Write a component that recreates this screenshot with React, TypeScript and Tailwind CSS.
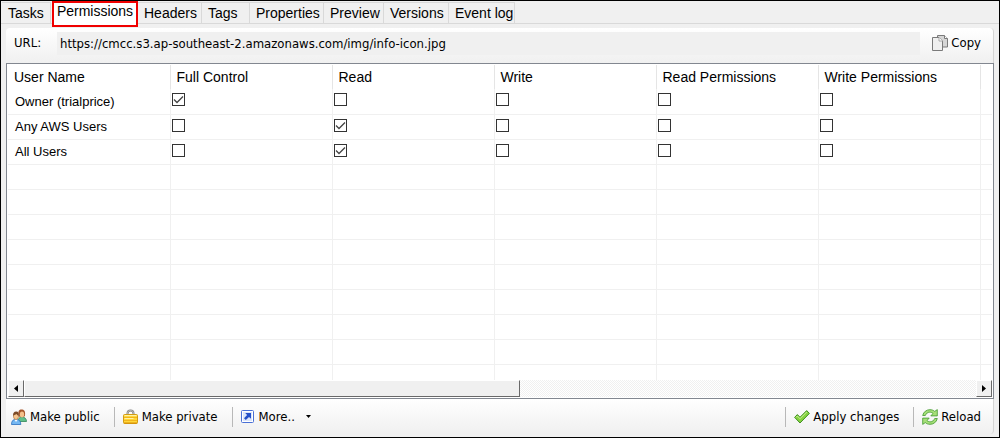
import type { ReactNode } from "react";
import { useState } from "react";

const tabs = [
  { name: "Tasks", width: "w-[49px]" },
  { name: "Permissions", width: "w-[86px]" },
  { name: "Headers", width: "w-[64px]" },
  { name: "Tags", width: "w-[48px]" },
  { name: "Properties", width: "w-[74px]" },
  { name: "Preview", width: "w-[60px]" },
  { name: "Versions", width: "w-[65px]" },
  { name: "Event log", width: "w-[66px]" },
];

const columns = ["Full Control", "Read", "Write", "Read Permissions", "Write Permissions"];

const initialUsers = [
  { name: "Owner (trialprice)", grants: [true, false, false, false, false] },
  { name: "Any AWS Users", grants: [false, true, false, false, false] },
  { name: "All Users", grants: [false, true, false, false, false] },
];

const emptyRows = Array.from({ length: 9 }, (_, i) => i);

function CopyIcon() {
  return (
    <svg width="16" height="16" viewBox="0 0 16 16" fill="none" stroke="#7a7a7a">
      <path d="M5.500 .5h7l3 3v8.500h-10z" fill="#d6d6d6" />
      <path d="M12.500 .5v3h3" fill="#fff" />
      <path d="M.5 2.500h6.500l3.500 3.500v9.500h-10z" fill="#efefef" />
      <path d="M7 2.500v3.500h3.500" fill="#fff" stroke="#a8a8a8" />
    </svg>
  );
}

function UsersIcon() {
  return (
    <svg width="16" height="16" viewBox="0 0 16 16">
      <path d="M7.500 6C7 2 8 .5 10.500.5S14.500 2 14 6.500l-1 1.500H8.500z" fill="#a4552a" />
      <path d="M7 12.500c0-3 1.500-4.500 4-4.500s4.500 1.500 4.500 4.500z" fill="#5fc08a" stroke="#318558" strokeWidth=".8" />
      <ellipse cx="11" cy="5.500" rx="2.200" ry="2.900" fill="#f3c18c" />
      <path d="M.5 15.500C.5 12 2 10.300 5 10.300s4.800 1.700 4.800 5.200z" fill="#75b8f3" stroke="#2a6fbe" strokeWidth=".8" />
      <path d="M3.500 10.500 5 13l1.700-2.500z" fill="#fff" />
      <ellipse cx="5" cy="7" rx="2.600" ry="3.500" fill="#f6c690" stroke="#a86b36" strokeWidth=".6" />
      <path d="M2.200 6.800C1.800 4.300 3 2.500 5.200 2.500S8.200 4.300 7.700 6.800C6.500 6.500 6 5.500 5.500 5 4.500 5.800 3.500 5.900 2.200 6.800z" fill="#7b4a27" />
    </svg>
  );
}

function LockIcon() {
  return (
    <svg width="16" height="16" viewBox="0 0 16 16">
      <path d="M4.500 6.500V4.500C4.500 2.500 5.500 1.500 7.500 1.500s3 1 3 3v2" fill="none" stroke="#808080" strokeWidth="2" />
      <path d="M4.500 6.500V4.500C4.500 2.500 5.500 1.500 7.500 1.500s3 1 3 3v2" fill="none" stroke="#d4d4d4" strokeWidth=".7" />
      <rect x=".5" y="5.500" width="14" height="9" rx="1" fill="#ffd83a" stroke="#d39c12" />
      <path d="M1 8.500h13M1 11.500h13" stroke="#f2b51c" />
      <path d="M1.500 6.500h12M1.500 9.500h9" stroke="#fff3a8" />
      <path d="M1 14h13" stroke="#d88d05" />
    </svg>
  );
}

function MoreIcon() {
  return (
    <svg width="13" height="13" viewBox="0 0 13 13">
      <rect x=".5" y=".5" width="12" height="12" rx="1" fill="#fff" stroke="#4a70d6" />
      <rect x="2" y="2" width="9" height="9" fill="#dbe5fa" />
      <path d="M4.200 3H10v5.800L8 6.900 4.800 10 3 8.200 6.100 5z" fill="#2550c8" />
    </svg>
  );
}

function CheckIcon() {
  return (
    <svg width="16" height="16" viewBox="0 0 16 16">
      <path d="M.6 8.300 3.400 5.600 6 8.300 12.700 1.600 15.400 4.400 6 14z" fill="#86d340" stroke="#3f8e22" strokeLinejoin="round" />
      <path d="M2.100 8.300 3.400 7 6 9.700 12.700 3" fill="none" stroke="#c9f296" />
    </svg>
  );
}

function ReloadIcon() {
  return (
    <svg width="16" height="16" viewBox="0 0 16 16" stroke="#3f982c" strokeWidth=".8" strokeLinejoin="round">
      <path d="M.7 6.500C1.500 2.800 4.500.7 8 .7c2 0 3.500.6 4.700 1.700L15.300.6v6.300H8.800L11 4.500C10 3.500 9 3.200 7.700 3.200c-2 0-3.500 1.200-4.400 3.300z" fill="#a6df78" />
      <path d="M15.300 9.500c-.8 3.700-3.800 5.800-7.300 5.800-2 0-3.500-.6-4.700-1.700L.7 15.400V9.100h6.500L5 11.500c1 1 2 1.300 3.300 1.300 2 0 3.500-1.200 4.400-3.300z" fill="#a6df78" />
    </svg>
  );
}

function ToolButton({ icon, children }: { icon: ReactNode; children: ReactNode }) {
  return (
    <button type="button" className="flex items-center gap-[3px] whitespace-nowrap">
      {icon}
      {children}
    </button>
  );
}

function Divider() {
  return <span className="mr-2 ml-3.5 h-5 w-px bg-[#b8b8b8]" />;
}

function ScrollButton({ label, path }: { label: string; path: string }) {
  return (
    <button
      type="button"
      aria-label={label}
      className="flex w-4 items-center justify-center border border-t-white border-l-white border-r-[#696969] border-b-[#696969] bg-[#f0f0f0]"
    >
      <svg width="4" height="7" viewBox="0 0 4 7">
        <path d={path} />
      </svg>
    </button>
  );
}

export default function App() {
  const [activeTab, setActiveTab] = useState("Permissions");
  const [users, setUsers] = useState(initialUsers);

  const toggleGrant = (row: number, col: number) => {
    setUsers(
      users.map((user, i) =>
        i === row ? { ...user, grants: user.grants.map((g, j) => (j === col ? !g : g)) } : user
      )
    );
  };

  return (
    <main className="flex min-h-screen flex-col border border-black bg-[#f0f0f0] font-['Liberation_Sans',Arial,sans-serif] text-black">
      <nav role="tablist" className="flex h-[23px] border-b border-[#d9d9d9] pt-px pl-px text-sm">
        {tabs.map((tab) => (
          <button
            key={tab.name}
            type="button"
            role="tab"
            aria-selected={tab.name === activeTab}
            onClick={() => setActiveTab(tab.name)}
            className={
              tab.name === activeTab
                ? `${tab.width} -mt-px ml-px flex h-[26px] shrink-0 items-start justify-center border-2 border-[#f00000] bg-white leading-4 whitespace-nowrap`
                : `${tab.width} shrink-0 border-t border-r border-[#d9d9d9] pl-1.5 text-left whitespace-nowrap`
            }
          >
            {tab.name}
          </button>
        ))}
      </nav>

      <section className="flex flex-1 flex-col px-[5px] pt-1 pb-[3px] font-['DejaVu_Sans_Condensed','DejaVu_Sans',sans-serif] text-[13px]">
        <div className="flex h-[35px] items-center rounded-t border-r border-[#d4d4d4] bg-linear-to-b from-white to-[#f0f0f0] pr-3 pb-[5px] pl-2">
          <label htmlFor="url" className="w-[43px]">
            URL:
          </label>
          <input
            id="url"
            readOnly
            value="https://cmcc.s3.ap-southeast-2.amazonaws.com/img/info-icon.jpg"
            className="mr-3 h-[23px] min-w-0 flex-1 bg-[#f0f0f0] px-[3px] outline-none"
          />
          <ToolButton icon={<CopyIcon />}>Copy</ToolButton>
        </div>

        <div className="flex flex-1 flex-col border border-[#828790] bg-white p-px">
          <div className="flex-1 overflow-hidden">
            <table className="w-full min-w-[984px] table-fixed border-collapse font-['Liberation_Sans',Arial,sans-serif] text-[13px]">
              <thead>
                <tr className="h-6 text-left text-sm">
                  <th className="w-[162px] border-r border-[#e5e5e5] px-1.5 font-normal">User Name</th>
                  {columns.map((col) => (
                    <th key={col} className="w-[162px] border-r border-[#e5e5e5] px-1.5 font-normal">
                      {col}
                    </th>
                  ))}
                  <th />
                </tr>
              </thead>
              <tbody>
                {users.map((user, row) => (
                  <tr key={user.name} className="h-[25px] border-b border-[#f0f0f0]">
                    <td className="border-r border-[#f0f0f0] px-[7px]">{user.name}</td>
                    {user.grants.map((granted, col) => (
                      <td key={columns[col]} className="border-r border-[#f0f0f0] px-px pt-1 align-top">
                        <label className="relative block size-[13px]">
                          <input
                            type="checkbox"
                            aria-label={`${columns[col]} for ${user.name}`}
                            checked={granted}
                            onChange={() => toggleGrant(row, col)}
                            className="block size-[13px] appearance-none border border-[#333] bg-white"
                          />
                          {granted && (
                            <svg
                              className="pointer-events-none absolute inset-0"
                              width="13"
                              height="13"
                              viewBox="0 0 13 13"
                              fill="none"
                              stroke="#444"
                            >
                              <path d="M2 6.500 5 9.500l6-6" strokeWidth="1.300" />
                            </svg>
                          )}
                        </label>
                      </td>
                    ))}
                    <td />
                  </tr>
                ))}
                {emptyRows.map((row) => (
                  <tr key={row} className="h-[25px] border-b border-[#f0f0f0] last:h-4 last:border-b-0">
                    <td className="border-r border-[#f0f0f0]" />
                    {columns.map((col) => (
                      <td key={col} className="border-r border-[#f0f0f0]" />
                    ))}
                    <td />
                  </tr>
                ))}
              </tbody>
            </table>
          </div>
          <div className="flex h-[17px] bg-[repeating-conic-gradient(#ffffff_0_25%,#f0f0f0_0_50%)] bg-size-[2px_2px]">
            <ScrollButton label="Scroll left" path="M4 0v7L0 3.500z" />
            <div className="flex-52 border border-t-white border-l-white border-r-[#696969] border-b-[#696969] bg-[#f0f0f0]" />
            <div className="flex-48" />
            <ScrollButton label="Scroll right" path="M0 0v7l4-3.500z" />
          </div>
        </div>

        <div className="flex h-[35px] items-center rounded-b border-r border-[#d4d4d4] bg-linear-to-b from-white to-[#f0f0f0] pr-3 pl-[5px]">
          <ToolButton icon={<UsersIcon />}>Make public</ToolButton>
          <Divider />
          <ToolButton icon={<LockIcon />}>Make private</ToolButton>
          <Divider />
          <ToolButton icon={<MoreIcon />}>
            <span className="pl-0.5">More..</span>
            <svg className="ml-2" width="5" height="3" viewBox="0 0 5 3">
              <path d="M0 0h5L2.500 3z" />
            </svg>
          </ToolButton>
          <span className="flex-1" />
          <Divider />
          <ToolButton icon={<CheckIcon />}>Apply changes</ToolButton>
          <Divider />
          <ToolButton icon={<ReloadIcon />}>Reload</ToolButton>
        </div>
      </section>
    </main>
  );
}
